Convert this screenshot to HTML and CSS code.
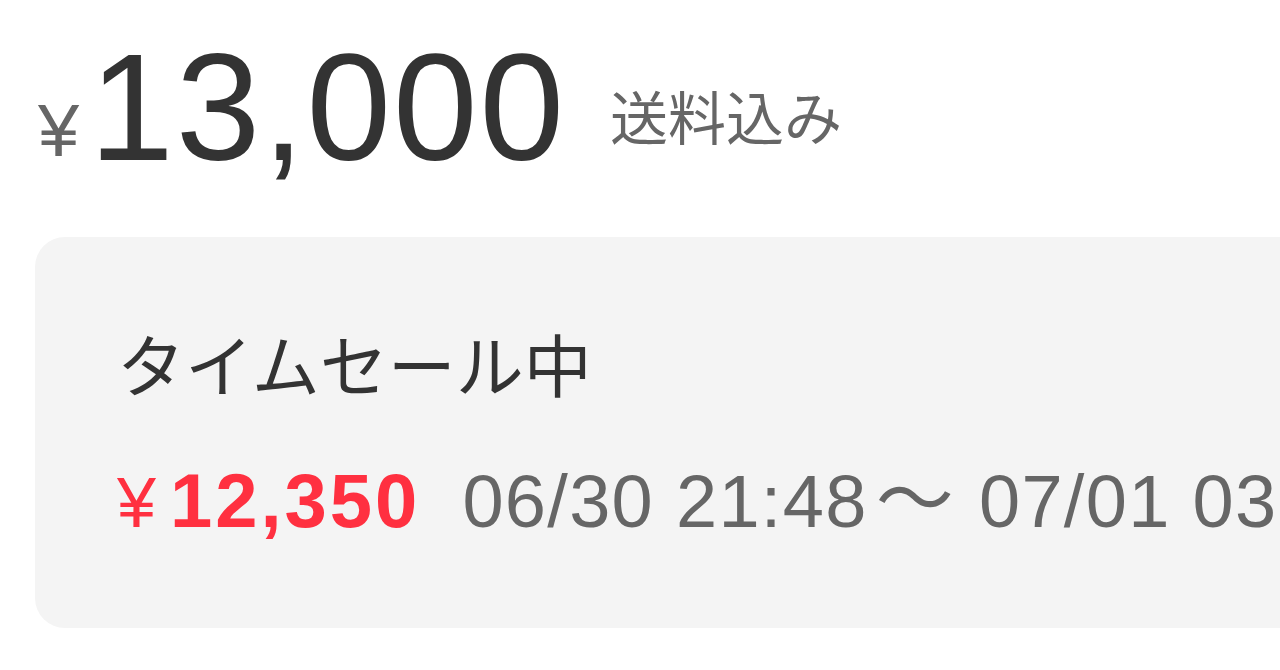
FILE: index.html
```html
<!DOCTYPE html>
<html lang="ja">
<head>
<meta charset="utf-8">
<title>商品価格</title>
<link rel="stylesheet" href="styles.css">
</head>
<body>
<main class="price-panel">
  <div class="price-row"><span class="price-yen">¥</span><span class="price-value">13,000</span><span class="price-note">送料込み</span></div>
  <section class="sale-card">
    <h2 class="sale-title">タイムセール中</h2>
    <div class="sale-row">
      <span class="sale-price"><span class="sale-yen">¥</span>12,350</span>
      <span class="sale-period">06/30 21:48<span class="sale-tilde">～</span>07/01 03:48</span>
    </div>
  </section>
</main>
</body>
</html>
```

FILE: styles.css
```css
html, body {
  margin: 0;
  padding: 0;
  background: #ffffff;
  overflow: hidden;
}

body {
  font-family: "Liberation Sans", Arial, "Noto Sans CJK JP", sans-serif;
  color: #333333;
}

.price-panel {
  padding: 31px 0 0 35px;
  width: 1400px;
}

/* headline price: yen mark, amount and shipping note on one line */
.price-row {
  font-size: 152px;
  line-height: 152px;
  height: 152px;
  white-space: nowrap;
}

.price-yen {
  font-size: 74px;
  color: #666666;
  margin-left: 3px;
  vertical-align: 4px;
}

.price-value {
  color: #333333;
  margin-left: 10px;
  letter-spacing: 2px;
}

.price-note {
  font-family: "Noto Sans CJK JP", sans-serif;
  font-size: 58px;
  color: #666666;
  margin-left: 44px;
  vertical-align: 20px;
}

/* time-sale box */
.sale-card {
  margin-top: 54px;
  background: #f4f4f4;
  border-radius: 30px;
  padding: 86px 0 90px 82px;
}

.sale-title {
  margin: 0;
  font-family: "Noto Sans CJK JP", sans-serif;
  font-weight: 400;
  font-size: 68px;
  line-height: 80px;
  color: #333333;
}

.sale-row {
  margin-top: 45px;
  display: flex;
  align-items: baseline;
  white-space: nowrap;
  height: 90px;
  line-height: 90px;
}

.sale-price {
  font-size: 76px;
  font-weight: 700;
  letter-spacing: 3px;
  color: #ff3040;
}

.sale-yen {
  font-weight: 400;
  font-size: 70px;
  letter-spacing: 0;
  margin-right: 14px;
}

.sale-period {
  font-size: 74px;
  letter-spacing: 1.3px;
  color: #666666;
  margin-left: 42px;
}

.sale-tilde {
  font-family: "Noto Sans CJK JP", sans-serif;
  font-size: 78px;
  margin: 0 24px 0 8px;
}
```
